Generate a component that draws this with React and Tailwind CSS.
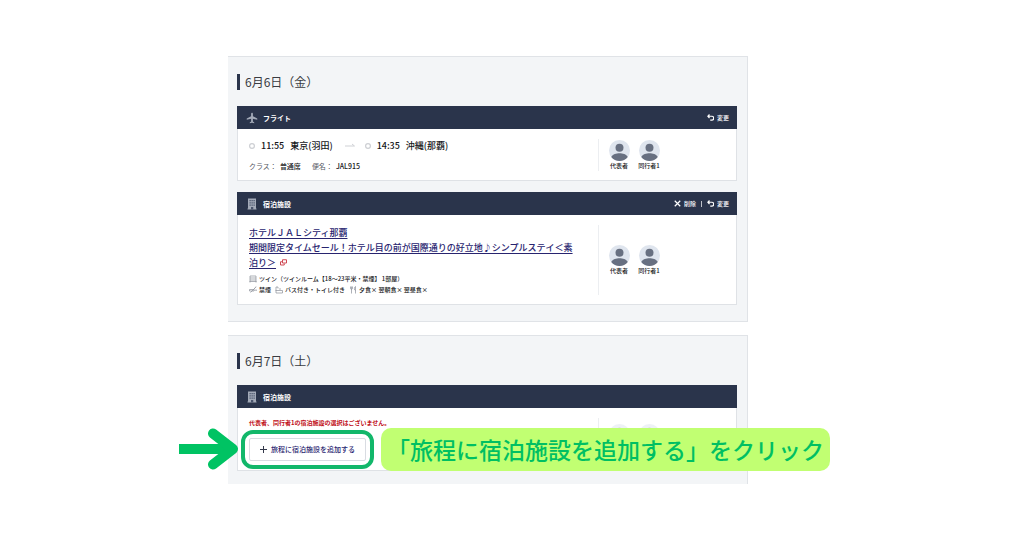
import { Fragment } from 'react';

const PlaneIcon = () => (
  <svg viewBox="0 0 24 24" className="size-[12px] text-[#a3aab8]" fill="currentColor" aria-hidden="true">
    <path d="M22.500 15.500v-2.500l-8.700-4.500V3.300c0-1.200-.8-2-1.800-2s-1.800.8-1.800 2v5.200l-8.700 4.500v2.500l8.700-2V19l-2.700 1.800v1.500l4.500-.9 4.500.9v-1.500L13.800 19v-5.500z" />
  </svg>
);

const BuildingIcon = () => (
  <svg viewBox="0 0 24 24" className="size-[12px]" aria-hidden="true">
    <path fill="#a3aab8" d="M4 1h16v20h1v2H3v-2h1z" />
    <path
      fill="#4a556d"
      d="M7 4h2.5v2.5H7zM11 4h2.5v2.5H11zM15 4h2.5v2.5H15zM7 8.5h2.5V11H7zM11 8.5h2.5V11H11zM15 8.5h2.5V11H15zM7 13h2.5v2.5H7zM11 13h2.5v2.5H11zM15 13h2.5v2.5H15zM10 18h4.5v5H10z"
    />
  </svg>
);

const ReturnIcon = () => (
  <svg viewBox="0 0 14 14" className="size-[7px]" fill="none" stroke="currentColor" strokeWidth="2.4" aria-hidden="true">
    <path d="M5 1 1.8 4.500 5 8M2 4.500h7.500a3.700 3.700 0 0 1 0 7.800H6.500" />
  </svg>
);

const CloseIcon = () => (
  <svg viewBox="0 0 14 14" className="size-[7px]" fill="none" stroke="currentColor" strokeWidth="2.4" aria-hidden="true">
    <path d="m1.500 1.500 11 11m0-11-11 11" />
  </svg>
);

const PlusIcon = () => (
  <svg viewBox="0 0 14 14" className="size-[7px] text-[#33384a]" fill="none" stroke="currentColor" strokeWidth="2" aria-hidden="true">
    <path d="M7 0v14M0 7h14" />
  </svg>
);

const WindowIcon = () => (
  <svg viewBox="0 0 14 14" className="ml-1 inline size-[7px] align-baseline text-[#d04a55]" fill="none" stroke="currentColor" strokeWidth="2" aria-hidden="true">
    <path d="M5 1.500h8V8H5zM4 5.500H1V12h7.500V9" />
  </svg>
);

const DotIcon = () => (
  <svg viewBox="0 0 12 12" className="size-[6px]" fill="none" stroke="#cdcfd3" strokeWidth="2.4" aria-hidden="true">
    <circle cx="6" cy="6" r="4.8" />
  </svg>
);

const RouteArrow = () => (
  <svg viewBox="0 0 10 6" className="h-[6px] w-[10px]" fill="none" stroke="#cfd1d5" aria-hidden="true">
    <path d="M0 3h9.5M7 1l2.5 2" />
  </svg>
);

const RoomIcon = () => (
  <svg viewBox="0 0 16 16" className="size-[8px]" fill="none" stroke="#8b8f99" strokeWidth="1.4" aria-hidden="true">
    <path d="M2 15V2h12v13M2 6h12M2 10h12M1 13h14" />
  </svg>
);

const NoSmokingIcon = () => (
  <svg viewBox="0 0 16 16" className="size-[8px]" fill="none" stroke="#8b8f99" strokeWidth="1.4" aria-hidden="true">
    <path d="M1 7h9v3H1zM12 7v3M14.500 7v3M3 13 13 3M11 5c0-2 3-1 3-4" />
  </svg>
);

const BathIcon = () => (
  <svg viewBox="0 0 16 16" className="size-[8px]" fill="none" stroke="#8b8f99" strokeWidth="1.4" aria-hidden="true">
    <path d="M2 9V2h4v3M1 9h14v5H2V9M8 6h4" />
  </svg>
);

const MealIcon = () => (
  <svg viewBox="0 0 16 16" className="size-[8px]" fill="none" stroke="#8b8f99" strokeWidth="1.4" aria-hidden="true">
    <path d="M3 1v4c0 2 4 2 4 0V1M5 1v14M13 15V1c-3 1-3 8 0 8" />
  </svg>
);

const Avatar = () => (
  <svg viewBox="0 0 42 42" className="size-[21px]" aria-hidden="true">
    <circle cx="21" cy="21" r="21" fill="#dfe5ee" />
    <circle cx="21" cy="15.500" r="8" fill="#687081" />
    <path fill="#687081" d="M4.500 34c3-6 10-7.500 16.500-7.500S34.500 28 37.500 34A21 21 0 0 1 4.500 34z" />
  </svg>
);

function Travelers({ children }) {
  return <ul className="flex items-center border-l border-[#eceef1] pl-[5px]">{children}</ul>;
}

function Party() {
  return (
    <Travelers>
      {['代表者', '同行者1'].map((name) => (
        <li key={name} className="flex w-[30px] flex-col items-center">
          <Avatar />
          <span className="text-[6px] leading-[10px] font-medium whitespace-nowrap">{name}</span>
        </li>
      ))}
    </Travelers>
  );
}

// Nobody is booked yet: faded avatars without names
function EmptyParty() {
  return (
    <Travelers>
      {[0, 1].map((slot) => (
        <li key={slot} className="flex w-[30px] justify-center pb-[10px] opacity-50">
          <Avatar />
        </li>
      ))}
    </Travelers>
  );
}

function Card({ icon, title, actions = [], party, children }) {
  return (
    <article>
      <header className="flex h-[23px] items-center justify-between bg-[#2a344b] pr-2 pl-[9px] text-white">
        <h3 className="flex items-center gap-[5px] text-[7px] leading-[10px] font-bold">
          {icon}
          {title}
        </h3>
        <div className="flex items-center gap-[5px] text-[6px] leading-[10px] font-medium">
          {actions.map(({ label, Icon }, i) => (
            <Fragment key={label}>
              {i > 0 && <span className="h-[6px] w-px bg-white/70" />}
              <button type="button" className="flex items-center gap-[3px]">
                <Icon />
                {label}
              </button>
            </Fragment>
          ))}
        </div>
      </header>
      <div className="grid grid-cols-[minmax(0,1fr)_127px] gap-3 border border-t-0 border-[#dfe2e6] bg-white px-[11px] pt-[10px] pb-[9px]">
        {children}
        {party}
      </div>
    </article>
  );
}

function Day({ date, className, children }) {
  return (
    <section className={`border-t border-r border-[#e0e3e7] bg-[#f3f5f7] pt-[17px] pr-[10px] pl-[9px] ${className}`}>
      <h2 className="mb-4 border-l-3 border-[#2a344b] pl-[5px] text-[12px] leading-[16px] text-[#3a3c42]">{date}</h2>
      <div className="flex flex-col gap-[11px]">{children}</div>
    </section>
  );
}

const change = { label: '変更', Icon: ReturnIcon };
const remove = { label: '削除', Icon: CloseIcon };

export default function App() {
  return (
    <main
      lang="ja"
      className="flex min-h-screen flex-col gap-[13px] bg-white pt-14 pr-[276px] pb-[54px] pl-[228px] font-['Noto_Sans_CJK_JP',sans-serif] text-[#16171a]"
    >
      <Day date="6月6日（金）" className="border-b pb-4">
        <Card icon={<PlaneIcon />} title="フライト" actions={[change]} party={<Party />}>
          <div>
            <p className="flex items-center text-[9px] leading-[14px] font-medium">
              <DotIcon />
              <span className="ml-[6px]">11:55</span>
              <span className="ml-[6px] mr-3">東京(羽田)</span>
              <RouteArrow />
              <span className="ml-[10px]">
                <DotIcon />
              </span>
              <span className="ml-[6px]">14:35</span>
              <span className="ml-[6px]">沖縄(那覇)</span>
            </p>
            <dl className="mt-2 flex gap-[3px] text-[7px] leading-[10px]">
              <dt className="text-[#55585f]">クラス：</dt>
              <dd className="mr-2 font-medium">普通席</dd>
              <dt className="text-[#55585f]">便名：</dt>
              <dd className="font-medium">JAL915</dd>
            </dl>
          </div>
        </Card>

        <Card icon={<BuildingIcon />} title="宿泊施設" actions={[remove, change]} party={<Party />}>
          <div>
            <a href="#hotel" className="block text-[9px] leading-[15px] font-medium text-[#28246f] underline underline-offset-2">
              ホテルＪＡＬシティ那覇
              <br />
              期間限定タイムセール！ホテル目の前が国際通りの好立地♪シンプルステイ＜素
              <br />
              泊り＞
              <WindowIcon />
            </a>
            <div className="mt-[3px] text-[6px] leading-[11px] font-medium">
              <p className="flex items-center gap-[2px]">
                <RoomIcon />
                ツイン（ツインルーム【18～23平米・禁煙】 1部屋）
              </p>
              <p className="flex items-center gap-[2px]">
                <NoSmokingIcon />
                <span className="mr-[2px]">禁煙</span>
                <BathIcon />
                <span className="mr-[2px]">バス付き・トイレ付き</span>
                <MealIcon />
                夕食× 翌朝食× 翌昼食×
              </p>
            </div>
          </div>
        </Card>
      </Day>

      <Day date="6月7日（土）" className="pb-[13px]">
        <Card icon={<BuildingIcon />} title="宿泊施設" party={<EmptyParty />}>
          <div>
            <p className="text-[6px] leading-[10px] font-bold text-[#c00d18]">
              代表者、同行者1の宿泊施設の選択はございません。
            </p>
            <div className="relative z-10 mt-[10px] w-[117px]">
              <button
                type="button"
                className="flex h-[23px] w-full items-center justify-center gap-[4px] rounded-xs border border-[#d9dce2] bg-white text-[7px] font-medium whitespace-nowrap text-[#28246f]"
              >
                <PlusIcon />
                旅程に宿泊施設を追加する
              </button>

              {/* Callout over the add button */}
              <div className="pointer-events-none absolute -inset-x-2 -inset-y-2 rounded-xl border-4 border-[#12b76a]" />
              <svg
                viewBox="0 0 60 42"
                className="absolute -top-[10px] right-full mr-[10px] h-[42px] w-[60px]"
                fill="none"
                stroke="#00c363"
                aria-hidden="true"
              >
                <path strokeWidth="10" d="M0 21h50" />
                <path strokeWidth="10" strokeLinecap="round" strokeLinejoin="round" d="M34 5.500 54 21 34 36.500" />
              </svg>
              <p className="absolute -top-[10px] left-full ml-[15px] rounded-[10px] bg-[#c1ff72] px-[6px] text-[23px] leading-[43px] font-medium whitespace-nowrap text-[#00bf63]">
                「旅程に宿泊施設を追加する」をクリック
              </p>
            </div>
          </div>
        </Card>
      </Day>
    </main>
  );
}
